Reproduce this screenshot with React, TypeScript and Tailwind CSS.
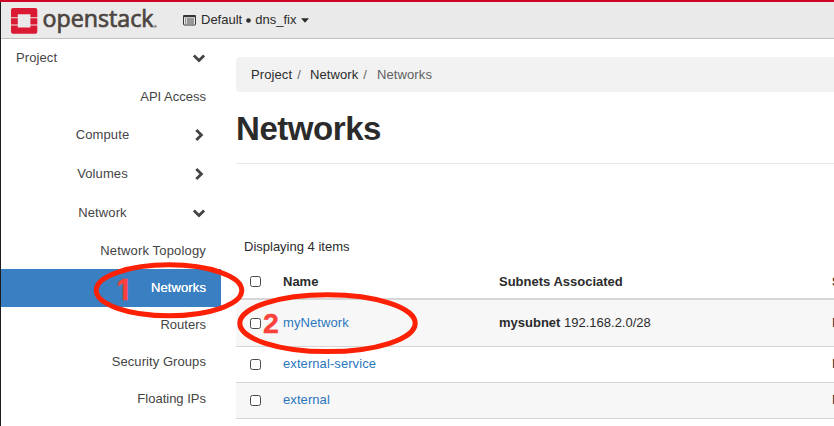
import React from "react";

type NavItem = { label: string; kind: "top" | "group" | "leaf"; open?: boolean; active?: boolean; h: string };

const nav: NavItem[] = [
  { label: "Project", kind: "top", open: true, h: "h-[38px]" },
  { label: "API Access", kind: "leaf", h: "h-[39px]" },
  { label: "Compute", kind: "group", h: "h-[38px]" },
  { label: "Volumes", kind: "group", h: "h-[39px]" },
  { label: "Network", kind: "group", open: true, h: "h-[39px]" },
  { label: "Network Topology", kind: "leaf", h: "h-[37px] tracking-[0.17px]" },
  { label: "Networks", kind: "leaf", active: true, h: "h-[38px] tracking-[0.1px]" },
  { label: "Routers", kind: "leaf", h: "h-[36px]" },
  { label: "Security Groups", kind: "leaf", h: "h-[37px] tracking-[0.07px]" },
  { label: "Floating IPs", kind: "leaf", h: "h-[37px]" },
];

function Chevron({ open }: { open?: boolean }) {
  return (
    <svg className="block shrink-0" width="14" height="14" viewBox="0 0 14 14" fill="none" stroke="#444" strokeWidth="2.8">
      <path d={open ? "M1.9 4.6 7 9.5l5.1-4.9" : "M4.3 1.9 9.4 7l-5.1 5.1"} />
    </svg>
  );
}

function NavRow({ item }: { item: NavItem }) {
  if (item.kind === "leaf") {
    return (
      <li className={`flex items-center justify-end pr-[15px] ${item.h} ${item.active ? "bg-[#397fc1] text-white [text-shadow:0_0_0.5px_white]" : ""}`}>
        {item.label}
      </li>
    );
  }
  return (
    <li className={`flex items-center pr-[15px] tracking-[0.1px] ${item.h}`}>
      <span className={item.kind === "top" ? "grow pl-[15px]" : "grow pl-[12px] text-center"}>{item.label}</span>
      <Chevron open={item.open} />
    </li>
  );
}

function Check() {
  return <span className="block h-[11px] w-[11px] rounded-[2.5px] border border-[#4a4a4a] bg-white" />;
}

function Row({ name, subnet, cidr, className, textClass }: { name: string; subnet?: string; cidr?: string; className: string; textClass?: string }) {
  return (
    <div className={`grid grid-cols-[47px_216px_333px_60px] items-center border-b border-[#d6d6d6] ${className}`}>
      <div className="pl-[14px]"><Check /></div>
      <div className={`tracking-[0.08px] text-[#2a76bd] ${textClass ?? ""}`}>{name}</div>
      <div>{subnet && <><b>{subnet}</b> {cidr}</>}</div>
      <div className={textClass ?? ""}>No</div>
    </div>
  );
}

export default function App() {
  return (
    <div className="relative flex h-[426px] w-[834px] flex-col overflow-hidden bg-white font-['Liberation_Sans',Arial,sans-serif] text-[13px] leading-[18px] text-[#2b2b2b]">
      <div className="h-[2px] shrink-0 bg-[#ce0424]" />
      <header className="flex h-[37px] shrink-0 items-center border-l border-[#1c1c1c] bg-[#eaeaea] pl-[10px] shadow-[inset_0_-1px_0_#bfbfbf]">
        <svg className="block" width="148" height="36" viewBox="11 2 148 36">
          <path fill="#da1a32" d="M13 7h22.300a2 2 0 0 1 2 2v7.200H30.400V13.300H17.800v2.900H11V9a2 2 0 0 1 2-2zM11 17.200h6.800v6.300H11zM30.400 17.200h6.900v6.300h-6.900zM11 24.500h6.800v2h12.600v-2h6.900V30.700a2 2 0 0 1-2 2H13a2 2 0 0 1-2-2z" />
          <text x="42.500" y="26.300" textLength="111" lengthAdjust="spacingAndGlyphs" fill="#4c4540" stroke="#4c4540" strokeWidth="0.700" className="font-['Open_Sans',sans-serif] text-[23px] font-normal">openstack</text>
          <circle cx="155.300" cy="25.200" r="1.500" fill="#999" />
        </svg>
        <div className="mb-px ml-[24px] flex items-center">
          <svg className="block" width="13" height="11" viewBox="0 0 13 11">
            <rect x=".5" y=".5" width="12" height="9.500" rx=".8" fill="none" stroke="#333" />
            <path d="M.5 0h12v2.200H.5z" fill="#333" />
            <path d="M2 4h1.300M4 4h7M2 6h1.300M4 6h7M2 8h1.300M4 8h7" stroke="#444" />
          </svg>
          <span className="ml-[5px]">Default</span>
          <svg className="mx-[4px] mt-px block" width="5" height="5" viewBox="0 0 5 5"><circle cx="2.500" cy="2.500" r="2.300" fill="#2b2b2b" /></svg>
          <span>dns_fix</span>
          <svg className="ml-[5px] block" width="8" height="5" viewBox="0 0 8 5"><path d="M0 .3h8L4 4.700z" fill="#2b2b2b" /></svg>
        </div>
      </header>
      <div className="flex min-h-0 grow">
        <aside className="w-[221px] shrink-0 border-l border-[#1c1c1c] text-[#444]">
          <ul>{nav.map((n) => <NavRow key={n.label} item={n} />)}</ul>
        </aside>
        <main className="ml-[15px] min-w-0 grow overflow-hidden">
          <nav className="mt-[18px] flex h-[35px] items-center rounded-l bg-[#f2f2f2] pl-[15px] tracking-[0.1px]">
            <span>Project</span>
            <span className="ml-[5px] text-[#666]">/</span>
            <span className="ml-[9px]">Network</span>
            <span className="ml-[5px] text-[#666]">/</span>
            <span className="ml-[10px] text-[#606060]">Networks</span>
          </nav>
          <h1 className="h-[72px] border-b border-[#e8e8e8] pt-[17px] text-[33px] leading-[39px] font-bold tracking-[-0.45px]">Networks</h1>
          <p className="mt-[74px] h-[27px] pl-[8px]">Displaying 4 items</p>
          <div className="w-[656px]">
            <div className="grid h-[35px] grid-cols-[47px_216px_333px_60px] items-center border-b-2 border-[#d6d6d6] font-bold">
              <div className="pl-[14px]"><Check /></div>
              <div>Name</div>
              <div>Subnets Associated</div>
              <div>Shared</div>
            </div>
            <Row name="myNetwork" subnet="mysubnet" cidr="192.168.2.0/28" className="h-[47px] bg-[#f7f7f7]" />
            <Row name="external-service" className="h-[36px]" textClass="pb-[2px]" />
            <Row name="external" className="h-[36px] bg-[#f7f7f7]" textClass="pb-[2px]" />
          </div>
        </main>
      </div>
      <svg className="pointer-events-none absolute inset-0" width="834" height="426" viewBox="0 0 834 426">
        <g fill="none" stroke="#fc2105" strokeWidth="5">
          <ellipse cx="169" cy="290.300" rx="72.800" ry="25.500" />
          <ellipse cx="327.500" cy="323.200" rx="87.700" ry="28.400" />
        </g>
        <g fill="#fb413c" stroke="#fb413c" strokeWidth="0.400" className="font-bold">
          <text x="117" y="300" className="font-['Inter',sans-serif] text-[28px]">1</text>
          <text x="263" y="333" className="font-['Liberation_Sans',Arial,sans-serif] text-[28.5px]">2</text>
        </g>
      </svg>
    </div>
  );
}
